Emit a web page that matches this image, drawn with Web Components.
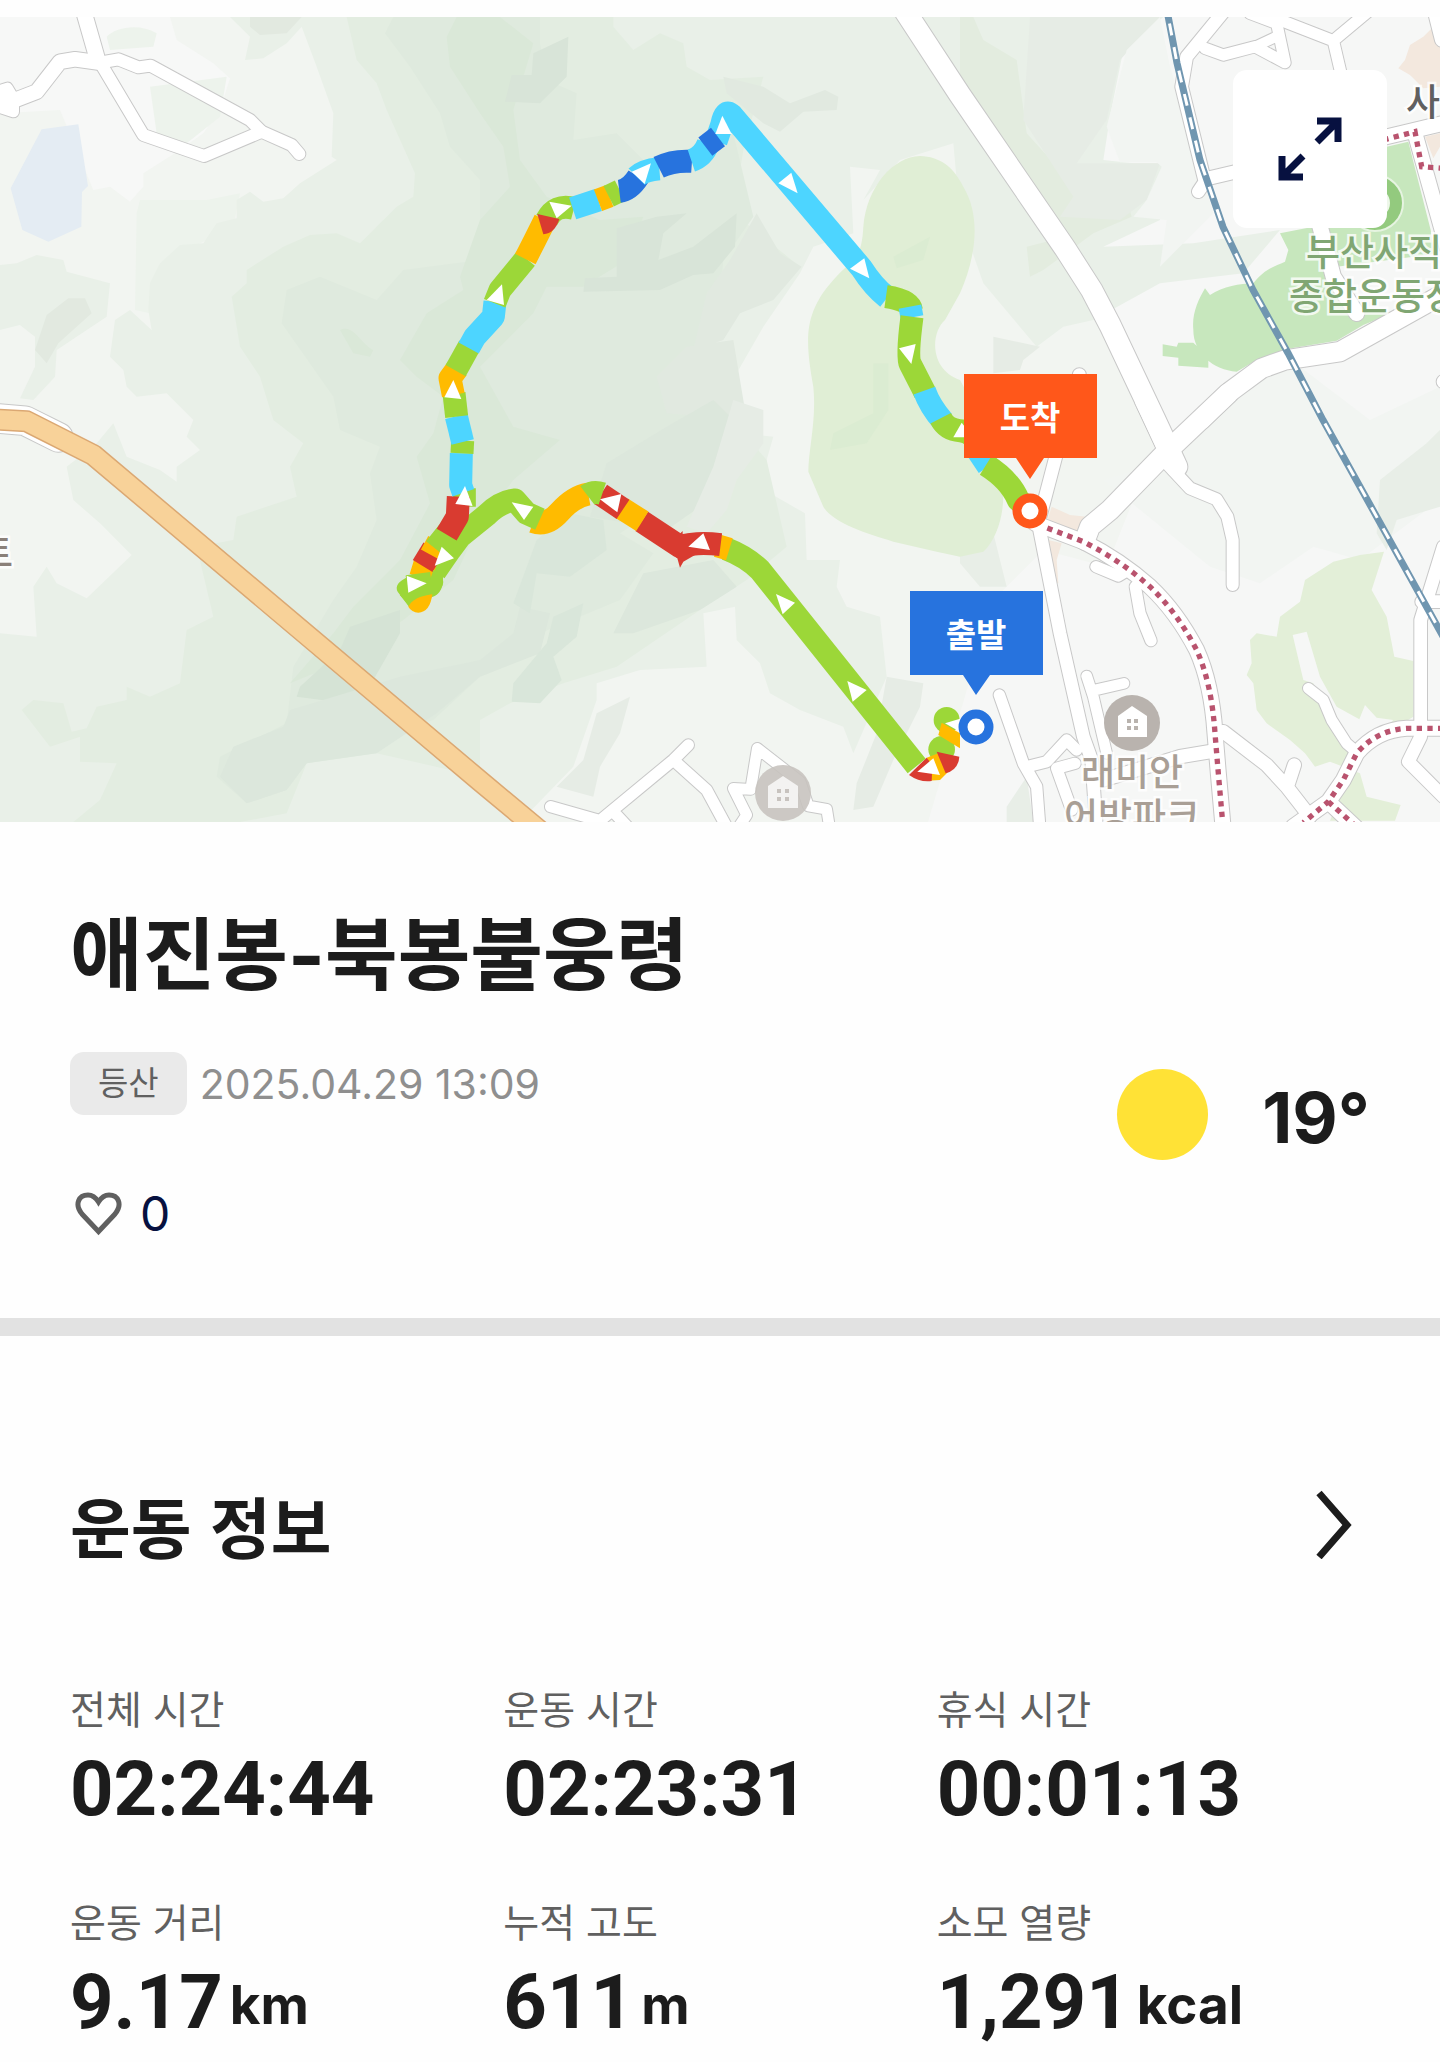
<!DOCTYPE html>
<html lang="ko">
<head>
<meta charset="utf-8">
<meta name="viewport" content="width=device-width, initial-scale=1">
<title>애진봉-북봉불웅령</title>
<style>
  body {
    margin: 0;
    padding-top: 17px;
    background-color: #fefefe;
    color: #1c1c1c;
    font-family: Inter, "Noto Sans CJK KR", sans-serif;
  }
</style>
</head>
<body>
<activity-map></activity-map>
<main>
  <activity-summary temperature="19°" likes="0">
    <span slot="title">애진봉-북봉불웅령</span>
    <span slot="type">등산</span>
    <time slot="date" datetime="2025-04-29T13:09">2025.04.29 13:09</time>
  </activity-summary>
  <stat-section>
    <span slot="title">운동 정보</span>
    <stat-item label="전체 시간">02:24:44</stat-item>
    <stat-item label="운동 시간">02:23:31</stat-item>
    <stat-item label="휴식 시간">00:01:13</stat-item>
    <stat-item label="운동 거리" unit="km">9.17</stat-item>
    <stat-item label="누적 고도" unit="m">611</stat-item>
    <stat-item label="소모 열량" unit="kcal">1,291</stat-item>
  </stat-section>
</main>
<script>
// The map is cut in six tiles. Shapes are written in tile units: a third of a map unit.
const TILES = {
  a: [0, 0], b: [480, 0], c: [960, 0],
  d: [0, 400], e: [480, 400], f: [960, 400]
};

const place = (tile) => `transform="translate(${TILES[tile].join(' ')}) scale(.33333)"`;

// tile, colour, outline
const AREAS = [
  ['c', '#f6f7f6', 'M-160 40L0 285 400 880 600 1300 440 1700 250 1650 100 1800 -100 2480H1450V0H-160Z'],
  ['a', '#f7f8f7', 'M0 51H510L530 120 640 190 690 235 660 330 610 400 540 450 430 520 430 560 390 605 330 560 280 570 180 330 0 340Z'],
  ['a', '#edf3ec', 'M450 260L680 230 660 350 560 430 470 400ZM320 110C350 80 420 70 470 100L460 140 330 150ZM420 600L620 600 720 580 700 680 480 790 450 940 405 930 410 640Z'],
  // lowest contour
  ['a', '#e9f0e8', 'M690 51L750 110 735 180 790 175 860 130 905 80 950 200 1000 340 995 470 1010 480 900 550 850 595 790 605 750 575 710 600 710 655 650 670 610 730 540 735 480 790 450 850 445 930 455 990 390 930 345 960 330 1070 370 1110 380 1160 410 1190 500 1180 580 1260 560 1310 600 1350 530 1400 530 1445 480 1410 380 1370 340 1270 290 1330 200 1400 220 1500 300 1570 395 1665 260 1795 170 1750 140 1700 100 1760 110 1910 0 1900V2466H1560L1720 2300 1790 2100 1790 2050 1920 2010 2120 2000 2110 1840 2205 1820 2210 1920 2280 1990 2310 2080 2400 2130 2530 2180 2560 2260 2660 2030 2640 1850 2540 1820 2510 1760 2520 1680 2420 1680 2415 1540 2310 1480 2300 1380 2320 1310 2220 1300 2210 1120 2290 980 2400 820 2440 740 2560 700 2550 500 2640 510 2590 600 2700 480 2860 430 2880 650 2950 850 3110 1040 3190 980 3280 960 3480 850 3730 820 3840 690 3580 730 3310 740 3480 660 3490 490 3400 490 3310 480 3330 350 3370 150 3490 51Z'],
  ['a', '#e9f0e8', 'M0 795L50 790 110 765 190 780 200 815 330 850 320 950 170 1050 165 1130 100 1200 60 1195 105 1100 105 1010 60 975 0 990Z'],
  ['a', '#e2e9e0', 'M140 945L205 895 255 895 275 940 175 1030 140 1090 105 1050ZM750 51H905L860 100 780 105 750 80Z'],
  // middle contour
  ['a', '#e3ede1', 'M1040 51L1070 180 1130 250 1160 330 1245 520 1240 590 1190 620 1080 730 1010 700 930 705 850 740 740 810 740 850 695 890 720 1040 780 1130 820 1260 910 1330 870 1400 890 1490 710 1550 700 1620 590 1640 640 1850 560 1890 540 2050 450 2090 380 2060 380 2100 290 2120 260 2185 215 2195 190 2110 100 2100 65 2130 150 2240 240 2210 240 2285 350 2290 300 2400 220 2466H720L860 2440 920 2290 1130 2260 1440 2330 1440 2160 1530 2110 1690 2050 1850 2000 2100 1830 2240 1740 2360 1640 2300 1380 2180 1240 2040 1220 2060 1060 2170 900 2400 800 2200 640 2230 450 2290 230 2130 240 2060 200 2050 130 1980 100 1900 150 1840 80 1840 51Z'],
  ['a', '#dfeade', 'M1180 51L1155 100 1230 200 1320 340 1350 440 1440 540 1440 780 1210 810 1130 900 960 830 860 870 845 970 1000 1190 1020 1290 1140 1340 1110 1420 1130 1560 1070 1700 1000 1800 880 2000 860 2170 660 2270 650 2330 740 2410 860 2370 920 2290 1300 2160 1440 2030 1560 1980 1620 1900 1860 1800 1960 1660 1860 1600 1970 1530 2040 1420 2110 1330 2150 1240 2010 1210 2020 1100 2150 1010 2160 900 2170 780 2260 650 2200 400 2060 520 1940 490 1850 400 1720 420 1730 280 1640 240 1620 130 1620 51Z'],
  ['a', '#dae8d8', 'M1370 51L1340 110 1350 200 1440 340 1510 440 1530 560 1440 660 1380 830 1390 870 1280 940 1200 1080 1250 1130 1330 1190 1300 1300 1250 1370 1290 1510 1200 1680 1060 1820 1000 1900 870 2050 1040 1980 1210 1860 1360 1740 1430 1590 1540 1440 1680 1320 1540 1280 1440 1100 1600 940 1640 860 1750 860 1880 780 1930 650 1800 660 1640 590 1560 480 1540 330 1600 130 1500 51ZM1020 990C1060 970 1080 1030 1120 1050L1110 1070 1060 1060Z'],
  // valleys and ridges
  ['b', '#d8e4d8', 'M160 160L265 110 260 230 180 310 75 305 95 225 155 225ZM410 685L530 650 620 640 550 700 535 780 640 740 770 640 765 740 700 820 640 825 540 870 310 875 315 835 410 830Z'],
  ['b', '#e1e9e0', 'M750 780L830 640 900 760 965 800 880 900 780 940 730 1020 640 1050 680 880ZM730 230L850 260 930 310 1035 270 1075 290 1070 330 970 335 900 395 850 370 740 280ZM620 1040L760 1020 800 1260 560 1240 530 1130Z'],
  ['d', '#d5e3d5', 'M1020 750L1050 680 1200 630 1200 700 1120 840 1040 910 890 890 900 860Z'],
  ['d', '#dce7dc', 'M870 930L1200 830 1440 780 1540 700 1560 620 1650 640 1620 760 1440 830 1310 940 1130 1060 920 1090 860 1170 740 1210 660 1130 700 1040 850 980Z'],
  ['e', '#dce7dc', 'M380 190L560 80 700 0 760 60 720 200 660 320 560 390 330 350ZM490 520L700 480 770 560 660 630 460 700 400 700Z'],
  ['e', '#d9e6da', 'M170 420L270 340 370 360 380 450 270 530 170 520 150 640 100 610ZM220 650L310 610 290 710 220 770 245 840 180 910 95 905 100 850 200 730Z'],
  ['e', '#e6ece5', 'M760 0L850 30 850 130 770 240 740 330 680 400 620 380 700 200ZM350 940L450 890 420 1000 360 1100 340 1190 230 1160 310 1080ZM1220 830L1330 850 1320 920 1240 1080 1180 1220 1120 1230 1130 1150 1190 1000Z'],
  ['c', '#e3ecdf', 'M0 51H40L70 120 170 180 200 400 400 620 490 560 515 650 400 700 250 810 210 830 200 740 280 720 0 260Z'],
  ['c', '#e6ece5', 'M210 51H600L480 180 440 360 350 490 600 490 560 600 480 660 300 650 340 590 190 360ZM100 1010L240 1040 190 1080 180 1110 100 1120Z'],
  ['c', '#f2f5f2', 'M600 51L630 200 730 540 760 640 600 800 620 660 520 650 560 600 605 500 590 487 480 487 440 380 500 150Z'],
  ['f', '#e8eee7', 'M0 430L100 400 140 560 60 560 0 490ZM140 1220L200 1130 220 1266H140Z'],
  ['f', '#f2f5f2', 'M430 240L560 200 850 -60 1020 -100 1230 60 1440 -40V300L1200 480 1060 440 900 550 750 500Z'],
  ['f', '#e8eee7', 'M1260 240L1400 130 1440 90V320L1310 360 1280 450 1250 400Z'],
  // water
  ['a', '#e4ecf3', 'M125 388L235 373 264 558 246 576 244 680 145 725 67 690 32 565Z'],
  // golf course
  ['b', '#e0eed5', 'M1320 468C1240 470 1160 560 1150 680 1145 790 1110 780 1060 840 970 940 975 1020 1000 1160 1010 1260 985 1350 985 1415L1030 1520C1060 1570 1160 1600 1240 1625L1370 1655 1440 1670 1510 1655C1560 1610 1585 1500 1560 1420L1540 1320 1440 1140C1350 1110 1350 1000 1395 960L1440 880C1480 790 1510 660 1450 560 1420 500 1380 470 1320 468Z'],
  ['b', '#dbecd2', 'M1240 770L1350 710 1330 780 1250 805ZM1180 1090L1225 1090 1225 1230 1160 1330 1050 1350 1060 1300 1180 1240Z'],
  // parks
  ['c', '#c7e7bd', 'M960 700L1060 680 1280 660V440L1345 425 1412 690 1440 880 1210 975 1130 1022 980 1047 890 1080 830 1115C760 1110 700 1060 700 990 695 940 715 900 735 865L750 885C790 860 840 850 880 850 910 810 940 800 975 785L985 750ZM608 1033L650 1040 655 1028 700 1028 745 1070V1103L655 1097V1073L608 1068Z'],
  ['c', '#f6f7f6', 'M1130 800L1440 760V880L1300 940 1190 920Z'],
  ['f', '#e3efd8', 'M1272 455L1200 465 1120 485 1035 540 1020 605 960 650 950 710 890 700 870 720 875 790 860 825 880 850 890 930 920 970 990 1020 1035 1060 1065 1100 1110 1085 1200 1120 1220 1190 1322 1215 1305 1262H1110L1140 1190 1200 1050 1360 950V783L1303 770 1280 650 1235 570Z'],
  ['f', '#f6f7f6', 'M998 705L1040 695 1080 830 1130 920 1198 958 1215 915 1250 953 1300 960 1200 1060 1110 960 1060 850 1030 840Z'],
  ['c', '#f3e8de', 'M1420 80L1390 110 1350 135 1335 180 1315 205 1350 225 1390 265 1440 260V90ZM1395 410L1440 400V440L1420 475Z'],
  ['f', '#f3e8de', 'M275 320L330 345 380 350 360 400 255 385ZM265 420L305 430 290 480 295 550 285 550Z']
];

// tile, width, centre line
const ROADS = [
  ['a', 46, 'M250 30L290 170'],
  ['a', 36, 'M290 170L430 405 612 468 785 395'],
  ['a', 44, 'M-10 300L40 302 110 275 180 185 225 178 300 188'],
  ['a', 36, 'M300 188L355 178 415 202 452 197 750 360 785 395 875 435 898 462'],
  ['a', 34, 'M-10 275L22 265 40 295 40 335 0 322'],
  ['c', 64, 'M-180 10L0 285 315 745 395 870 450 975 585 1260 650 1400'],
  ['c', 58, 'M1480 865L1140 1055 975 1080 905 1105 810 1175 722 1260'],
  ['c', 38, 'M795 30L680 170 665 260 735 545 715 575'],
  ['c', 34, 'M735 145L790 165 885 140 975 188 950 70 870 40'],
  ['c', 30, 'M885 140L945 112'],
  ['c', 34, 'M960 60L1120 122 1230 30M1120 122L1150 250'],
  ['c', 40, 'M745 535L850 510'],
  ['c', 44, 'M1260 415L1450 370M1365 400L1460 740'],
  ['c', 46, 'M1075 660L1120 830 1190 940'],
  ['c', 40, 'M358 1125V1160M1450 1145H1460M1425 40L1445 120'],
  ['f', 52, 'M550 0L620 150'],
  ['f', 60, 'M805 -20L620 155 450 330 390 380 375 420'],
  ['f', 45, 'M225 370L370 425Q480 480 570 560Q650 635 710 750Q755 850 765 1000L775 1120 790 1290'],
  ['f', 38, 'M290 160L235 370 300 700 370 1010 395 1080 410 1290'],
  ['f', 36, 'M620 190L690 265 770 298 802 350 818 420V555'],
  ['f', 34, 'M408 500L475 528 505 510M526 560L540 640 573 722'],
  ['f', 32, 'M380 828L400 890 440 1060M405 870L492 850'],
  ['f', 34, 'M118 885L190 1090 230 1160 240 1290M200 1100L260 1085 320 1020 350 1050M345 1090L290 1105 335 1230'],
  ['f', 40, 'M430 1140L660 1070 750 1055'],
  ['f', 40, 'M790 995L920 1095 980 1160 1050 1250M1003 1095L985 1150'],
  ['f', 45, 'M1460 985H1340Q1250 990 1190 1060L1150 1140 1105 1205 1000 1280M1105 1205L1190 1285'],
  ['f', 32, 'M1045 865L1090 900 1115 960 1160 1030 1195 1060'],
  ['f', 38, 'M1450 440L1382 660V1010L1345 1085 1450 1190M1385 605H1450'],
  ['e', 34, 'M212 1220L360 1262 580 1080 625 1035M580 1080L680 1170 745 1290M400 1235L470 1310'],
  ['e', 32, 'M770 1290L800 1245 760 1165 812 1168 832 1045 960 1145 985 1218 1040 1228 1050 1290'],
  ['d', 86, 'M-10 55L75 62 175 112']
];

const SUBWAY = [
  ['f', 'M262 384L370 425Q480 480 570 560Q650 635 710 750Q755 850 765 1000L775 1120 790 1290'],
  ['f', 'M1450 985H1340Q1250 990 1190 1060L1150 1140 1105 1205 1030 1268M1105 1205L1180 1272'],
  ['c', 'M1270 420L1365 395 1385 500 1450 505']
];

const GREEN = '#9cd738';
const CYAN = '#4dd5ff';
const BLUE = '#2773de';
const AMBER = '#ffbb00';
const RED = '#d93b30';

// tile, pace colour, centre line
const TRACK = [
  ['e', GREEN, 'M1310 1098L840 510Q800 470 738 446'],
  ['e', AMBER, 'M748 448L712 437'],
  ['e', RED, 'M722 434Q650 425 600 440L485 364'],
  ['e', AMBER, 'M487 364L425 325'],
  ['e', RED, 'M429 328L362 283'],
  ['e', AMBER, 'M325 282Q280 290 240 335T160 365'],
  ['e', GREEN, 'M367 281Q340 272 322 286M180 358L140 340 105 300Q60 305 20 345L-60 410 -90 450 -135 515'],
  ['d', GREEN, 'M1225 562L1250 590M1225 562L1295 545 1280 565'],
  ['d', AMBER, 'M1258 602L1259 603M1262 532L1275 490'],
  ['d', GREEN, 'M1222 560L1295 550'],
  ['d', RED, 'M1268 498L1300 445'],
  ['d', AMBER, 'M1293 465L1315 425'],
  ['d', GREEN, 'M1305 445L1345 395M1393 320V265'],
  ['d', RED, 'M1340 404L1372 350 1375 290'],
  ['d', CYAN, 'M1390 278L1382 255 1384 160'],
  ['d', GREEN, 'M1386 160L1388 122'],
  ['d', CYAN, 'M1388 126L1369 49'],
  ['d', GREEN, 'M1370 50L1362 -20'],
  ['a', AMBER, 'M1360 1185L1350 1135 1372 1105'],
  ['a', GREEN, 'M1367 1112L1408 1038'],
  ['a', CYAN, 'M1406 1044L1425 1010 1480 950 1485 905'],
  ['b', GREEN, 'M44 910L60 870 138 775'],
  ['b', AMBER, 'M136 777L165 720 195 660'],
  ['b', GREEN, 'M200 660Q225 610 282 625'],
  ['b', CYAN, 'M278 625L355 600'],
  ['b', AMBER, 'M354 601L388 588'],
  ['b', GREEN, 'M386 589L420 572'],
  ['b', BLUE, 'M418 574Q450 570 475 530'],
  ['b', CYAN, 'M470 530Q490 510 538 506'],
  ['b', BLUE, 'M536 502Q580 480 636 484'],
  ['b', CYAN, 'M634 482Q670 470 685 430'],
  ['b', CYAN, 'M708 425L725 375Q735 325 755 345L1145 805Q1180 860 1222 893'],
  ['b', BLUE, 'M676 440L714 411'],
  ['b', GREEN, 'M1218 890Q1290 900 1294 930'],
  ['b', CYAN, 'M1290 920L1296 952'],
  ['b', GREEN, 'M1296 950Q1280 1070 1290 1090T1335 1178'],
  ['b', CYAN, 'M1333 1172Q1350 1220 1390 1265'],
  ['e', GREEN, 'M1382 55Q1400 90 1440 92T1500 140'],
  ['f', CYAN, 'M55 155L85 200'],
  ['f', GREEN, 'M78 195Q150 240 175 300L210 330']
];

const ARROWS = [
  ['a', '1360,1140 1384,1197 1333,1192'],
  ['b', '727,347 755,402 706,402'], ['b', '895,550 934,518 953,580'],
  ['b', '1110,806 1153,775 1168,835'], ['b', '1257,1045 1307,1032 1294,1092'],
  ['b', '66,853 72,915 20,900'], ['b', '208,605 275,617 230,655'],
  ['b', '455,515 513,490 494,552'],
  ['d', '1395,258 1418,318 1366,312'], ['d', '1325,440 1362,475 1304,497'],
  ['d', '1220,527 1280,550 1225,578'],
  ['e', '95,307 160,320 132,360'], ['e', '360,298 424,282 412,337'],
  ['e', '625,440 670,400 690,450'], ['e', '888,582 945,608 908,643'],
  ['e', '1102,843 1160,870 1118,905'], ['e', '1420,112 1445,68 1480,112']
];

const RAIL = 'M1165 0L1177 63 1200 160 1223 227 1253 290 1288 353 1323 420 1445 640';

class ActivityMap extends HTMLElement {
  constructor() {
    super();
    this.attachShadow({mode: 'open'});

    const roads = (extra, colour) => ROADS.map(([tile, width, d]) =>
      `<path ${place(tile)} d="${d}" stroke="${colour}" stroke-width="${width + extra}"/>`).join('');

    this.shadowRoot.innerHTML = `
    <style>
      :host {
        display: block;
        position: relative;
      }
      .map {
        display: block;
        width: 100%;
        height: auto;
      }
      .line {
        fill: none;
        stroke-linecap: round;
        stroke-linejoin: round;
      }
      text {
        font-family: "Noto Sans CJK KR", sans-serif;
        font-weight: 500;
        font-size: 37px;
        paint-order: stroke;
        stroke: #ffffffcc;
        stroke-width: 5px;
      }
      .flag {
        font-size: 33px;
        font-weight: 700;
        fill: white;
        stroke: none;
        text-anchor: middle;
      }
      button {
        position: absolute;
        top: 53px;
        right: 53px;
        display: flex;
        align-items: center;
        justify-content: center;
        width: 154px;
        height: 158px;
        padding: 0;
        background-color: white;
        border: none;
        border-radius: 14px;
      }
    </style>
    <svg class="map" viewBox="0 17 1440 805" role="img" aria-label="등산 경로 지도">
      <rect y="17" width="1440" height="805" fill="#f2f5f1"/>
      ${AREAS.map(([tile, colour, d]) => `<path ${place(tile)} d="${d}" fill="${colour}"/>`).join('')}
      <circle cx="1375" cy="203" r="28" fill="#93ca7e" stroke="#e6f4e1" stroke-width="2"/>
      <circle cx="1375" cy="203" r="15" fill="#eef7ea"/>

      <g class="line">
        ${roads(6, '#c8c8c8')}
        ${roads(0, '#ffffff')}
        <g ${place('d')}>
          <path d="M-20 58L80 64 280 165 1440 1143 1620 1293" stroke="#dba873" stroke-width="66"/>
          <path d="M-20 58L80 64 280 165 1440 1143 1620 1293" stroke="#f8d299" stroke-width="57"/>
        </g>
      </g>
      <g fill="none" stroke="#b9536e" stroke-width="16" stroke-dasharray="16 16">
        ${SUBWAY.map(([tile, d]) => `<path ${place(tile)} d="${d}"/>`).join('')}
      </g>
      <g fill="none">
        <path d="${RAIL}" stroke="#7096b0" stroke-width="7"/>
        <path d="${RAIL}" stroke="#ffffff" stroke-width="3" stroke-dasharray="12 12"/>
      </g>

      <g fill="#c8c3bf">
        <circle cx="783" cy="793" r="28" fill-opacity=".9"/>
        <path d="M768 808V786L783 776 798 786V808Z" fill="#f3f2f1"/>
        <path d="M777 789h4v4h-4zM785 789h4v4h-4zM777 797h4v4h-4zM785 797h4v4h-4z"/>
      </g>
      <g fill="#b9b3ae">
        <circle cx="1132" cy="723" r="28"/>
        <path d="M1118 737V716L1132 706 1147 716V737Z" fill="white"/>
        <path d="M1127 719h4v4h-4zM1134 719h4v4h-4zM1127 726h4v4h-4zM1134 726h4v4h-4z"/>
      </g>
      <text x="1406" y="116" fill="#606060">사</text>
      <text x="1306" y="266" fill="#80a673">부산사직</text>
      <text x="1289" y="310" fill="#80a673">종합운동장</text>
      <text x="1132" y="786" fill="#a99f96" text-anchor="middle">래미안</text>
      <text x="1132" y="830" fill="#a99f96" text-anchor="middle">어방파크</text>
      <text x="13" y="567" fill="#8b8079" text-anchor="end">트</text>

      <g ${place('e')}>
        <circle cx="1400" cy="960" r="39" fill="${GREEN}"/>
        <circle cx="1385" cy="1048" r="40" fill="${GREEN}"/>
        <path d="M1385 968L1440 1000V1045L1375 1005Z" fill="${AMBER}"/>
        <path d="M1340 1073L1375 1060 1410 1110 1380 1140 1330 1143Z" fill="${AMBER}"/>
        <path d="M1370 1055L1438 1070Q1435 1110 1397 1120Z" fill="${RED}"/>
        <path d="M575 400L598 403 608 393V403L640 400 650 462 610 485 600 503 592 475 560 450Z" fill="${RED}"/>
      </g>
      <g fill="none" stroke-width="69" stroke-linejoin="round">
        ${TRACK.map(([tile, colour, d]) => `<path ${place(tile)} d="${d}" stroke="${colour}"/>`).join('')}
      </g>
      <path ${place('e')} d="M1340 1073L1287 1125Q1320 1148 1355 1143L1357 1095Z" fill="${RED}"/>
      <path ${place('b')} d="M172 642L238 657Q225 700 190 703Z" fill="${RED}"/>
      <g ${place('d')}>
        <path d="M1225 530Q1180 550 1193 575L1228 622 1295 592Q1335 580 1328 520L1300 510 1290 540Z" fill="${GREEN}"/>
        <path d="M1225 620Q1240 590 1297 583 1290 637 1255 638 1235 637 1225 620Z" fill="${AMBER}"/>
      </g>
      <g fill="white">
        ${ARROWS.map(([tile, points]) => `<polygon ${place(tile)} points="${points}"/>`).join('')}
        <polygon ${place('e')} points="1312,1115 1360,1075 1380,1125"/>
        <polygon ${place('e')} points="1395,970 1445,955 1445,998"/>
      </g>

      <path d="M964 374H1097V458H1044L1030 479 1016 458H964Z" fill="#ff571a"/>
      <text class="flag" x="1030" y="430">도착</text>
      <circle cx="1030" cy="511" r="13" fill="white" stroke="#ff571a" stroke-width="9"/>
      <path d="M910 591H1043V675H990L976 695 963 675H910Z" fill="${BLUE}"/>
      <text class="flag" x="976" y="647">출발</text>
      <circle cx="976" cy="727" r="13" fill="white" stroke="${BLUE}" stroke-width="9"/>
    </svg>
    <button type="button" aria-label="지도 확대">
      <svg width="64" height="64" viewBox="0 0 64 64" fill="none" stroke="#071140" stroke-width="7">
        <path d="M39 4H60V25M60 4L39 25"/>
        <path d="M4 39V60H25M4 60L25 39"/>
      </svg>
    </button>
    `;
  }
}

class ActivitySummary extends HTMLElement {
  constructor() {
    super();
    this.attachShadow({mode: 'open'});

    this.shadowRoot.innerHTML = `
    <style>
      :host {
        display: block;
        padding: 83px 70px 74px;
        border-bottom: 18px solid #e2e2e2;
      }
      h1 {
        margin: 0 0 47px;
        font-size: 79px;
        font-weight: 700;
        line-height: 100px;
      }
      .info, .meta, .weather {
        display: flex;
      }
      .info {
        justify-content: space-between;
        align-items: flex-start;
      }
      .meta {
        align-items: center;
        gap: 13px;
        margin-bottom: 69px;
        font-size: 41px;
        color: #8f8f8f;
      }
      .type {
        padding: 0 28px;
        border-radius: 14px;
        background-color: #eaeaea;
        color: #606060;
        font-size: 33px;
        line-height: 63px;
      }
      button {
        display: flex;
        align-items: center;
        gap: 18px;
        padding: 0 5px;
        border: none;
        background: none;
        color: #071140;
        font: 48px/60px Inter, sans-serif;
      }
      .weather {
        gap: 54px;
        padding-top: 17px;
        font-size: 70px;
        font-weight: 700;
        line-height: 98px;
      }
      .sun {
        width: 91px;
        height: 91px;
        border-radius: 50%;
        background-color: #ffe236;
      }
    </style>
    <h1><slot name="title"></slot></h1>
    <section class="info">
      <div>
        <div class="meta">
          <span class="type"><slot name="type"></slot></span>
          <slot name="date"></slot>
        </div>
        <button type="button" aria-label="좋아요">
          <svg width="47" height="44" viewBox="0 0 47 44" fill="none" stroke="#606060" stroke-width="5">
            <path d="M23.500 39.500L7 22C-1 12 4 3 13 3c5 0 8 3 10.500 7C26 6 29 3 34 3c9 0 14 9 6 19Z"/>
          </svg>
          <span>${this.getAttribute('likes')}</span>
        </button>
      </div>
      <div class="weather">
        <div class="sun"></div>
        <span>${this.getAttribute('temperature')}</span>
      </div>
    </section>
    `;
  }
}

class StatSection extends HTMLElement {
  constructor() {
    super();
    this.attachShadow({mode: 'open'});

    this.shadowRoot.innerHTML = `
    <style>
      :host {
        display: block;
        padding: 148px 70px 19px;
      }
      header {
        display: flex;
        justify-content: space-between;
        align-items: center;
        margin-bottom: 115px;
      }
      h2 {
        margin: 0;
        font-size: 66px;
        font-weight: 700;
        line-height: 80px;
        font-family: "Noto Sans CJK KR", sans-serif;
      }
      a {
        display: flex;
        padding-right: 17px;
      }
      .stats {
        display: grid;
        grid-template-columns: repeat(3, 1fr);
        row-gap: 61px;
      }
    </style>
    <header>
      <h2><slot name="title"></slot></h2>
      <a href="#" aria-label="운동 정보 더보기">
        <svg width="38" height="70" viewBox="0 0 38 70" fill="none" stroke="#1c1c1c" stroke-width="7">
          <path d="M4 4L32 36 4 68"/>
        </svg>
      </a>
    </header>
    <section class="stats">
      <slot></slot>
    </section>
    `;
  }
}

class StatItem extends HTMLElement {
  constructor() {
    super();
    this.attachShadow({mode: 'open'});

    this.shadowRoot.innerHTML = `
    <style>
      :host {
        display: flex;
        flex-direction: column;
        gap: 12px;
      }
      .label {
        color: #606060;
        font-size: 39px;
        line-height: 56px;
        font-family: "Noto Sans CJK KR", sans-serif;
      }
      .value {
        display: flex;
        align-items: flex-end;
        gap: 7px;
        font-family: Roboto, sans-serif;
        font-size: 76px;
        font-weight: 700;
        line-height: 84px;
      }
      .unit {
        font-family: Inter, sans-serif;
        font-size: 53px;
        line-height: 78px;
      }
    </style>
    <div class="label">${this.getAttribute('label')}</div>
    <div class="value">
      <span><slot></slot></span>
      ${this.hasAttribute('unit') ? `<span class="unit">${this.getAttribute('unit')}</span>` : ''}
    </div>
    `;
  }
}

customElements.define('activity-map', ActivityMap);
customElements.define('activity-summary', ActivitySummary);
customElements.define('stat-section', StatSection);
customElements.define('stat-item', StatItem);
</script>
</body>
</html>
